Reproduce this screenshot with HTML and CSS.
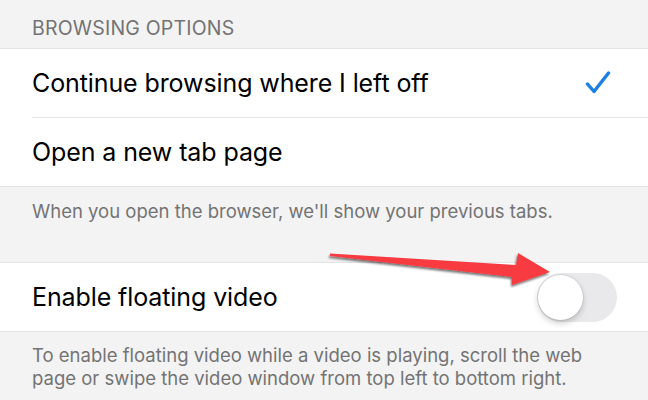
FILE: index.html
```html
<!DOCTYPE html>
<html lang="en">
<head>
    <meta charset="UTF-8">
    <meta name="viewport" content="width=device-width, initial-scale=1.0">
    <title>Settings</title>
    <link rel="stylesheet" href="styles.css">
</head>
<body>
    <div class="settings">
        <div class="section-header">BROWSING OPTIONS</div>
        <div class="group">
            <div class="row">
                <span class="label">Continue browsing where I left off</span>
                <svg class="check" width="26" height="24" viewBox="0 0 26 24">
                    <path d="M2.5 13 L9 20.5 L23.5 2" fill="none" stroke="#1b7fe3" stroke-width="3.4" stroke-linecap="round" stroke-linejoin="round"/>
                </svg>
            </div>
            <div class="row">
                <span class="label">Open a new tab page</span>
            </div>
        </div>
        <div class="section-footer">When you open the browser, we'll show your previous tabs.</div>

        <div class="group">
            <div class="row">
                <span class="label">Enable floating video</span>
                <div class="toggle"><div class="knob"></div></div>
            </div>
        </div>
        <div class="section-footer">To enable floating video while a video is playing, scroll the web page or swipe the video window from top left to bottom right.</div>
    </div>

    <svg class="arrow" width="648" height="400" viewBox="0 0 648 400">
        <defs>
            <filter id="arrowShadow" x="-10%" y="-50%" width="120%" height="200%">
                <feDropShadow dx="-1" dy="2" stdDeviation="1.2" flood-color="#000" flood-opacity="0.55"/>
            </filter>
        </defs>
        <polygon points="330,253.5 330,256 512,277 512,285 550,272 518,253 516,265" fill="#f83b41" filter="url(#arrowShadow)"/>
    </svg>
</body>
</html>
```

FILE: styles.css
```css
body {
    margin: 0;
    padding: 0;
    background-color: #f3f3f3;
    font-family: Inter, "Noto Sans", sans-serif;
    color: #000;
    position: relative;
    overflow: hidden;
}
.settings {
    width: 648px;
}
.section-header {
    box-sizing: border-box;
    height: 48px;
    padding: 7px 0 0 32px;
    display: flex;
    align-items: center;
    font-size: 19.5px;
    color: #737373;
    letter-spacing: 0.2px;
}
.group {
    background-color: #fff;
    border-top: 1px solid #e4e4e4;
    border-bottom: 1px solid #e4e4e4;
    padding-left: 32px;
}
.row {
    height: 68px;
    display: flex;
    align-items: center;
    justify-content: space-between;
    padding-right: 31px;
    border-bottom: 1px solid #e4e4e4;
}
.row:last-child {
    border-bottom: none;
}
.label {
    font-size: 25px;
    letter-spacing: -0.1px;
}
.check {
    margin-right: 6px;
}
.section-footer {
    padding: 13px 40px 0 32px;
    min-height: 62px;
    font-size: 18.5px;
    line-height: 23px;
    color: #737373;
}
.section-footer:last-child {
    padding-top: 12px;
}
.toggle {
    width: 80px;
    height: 49px;
    border-radius: 25px;
    background-color: #e9e9eb;
    position: relative;
}
.knob {
    position: absolute;
    top: 2px;
    left: 1px;
    width: 45px;
    height: 45px;
    border-radius: 50%;
    background-color: #fff;
    box-shadow: 0 3px 6px rgba(0, 0, 0, 0.2), 0 0 0 1px rgba(0, 0, 0, 0.06);
}
.arrow {
    position: absolute;
    top: 0;
    left: 0;
    pointer-events: none;
}
```
